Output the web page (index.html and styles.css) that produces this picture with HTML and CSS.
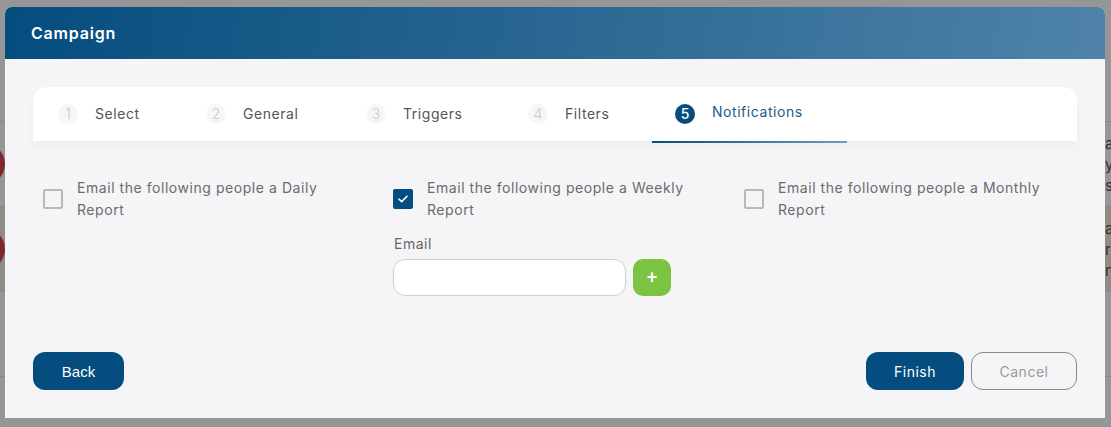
FILE: index.html
```html
<!DOCTYPE html>
<html lang="en">
<head>
  <meta charset="UTF-8" />
  <meta name="viewport" content="width=device-width, initial-scale=1.0"/>
  <title>Campaign - Notifications</title>
  <link rel="stylesheet" href="styles.css">
</head>
<body>
  <!-- page behind the modal -->
  <div class="page">
    <div class="page-row top"></div>
    <div class="page-row">
      <span class="avatar"></span>
      <span class="row-text">a<br>y,<br>s</span>
    </div>
    <div class="page-row tinted">
      <span class="avatar"></span>
      <span class="row-text">a<br>r<br>n</span>
    </div>
    <div class="page-row"></div>
  </div>

  <div class="overlay">
    <div class="modal">
      <div class="modal-header">Campaign</div>

      <div class="modal-body">
        <div class="steps">
          <div class="step"><span class="step-num">1</span>Select</div>
          <div class="step"><span class="step-num">2</span>General</div>
          <div class="step"><span class="step-num">3</span>Triggers</div>
          <div class="step"><span class="step-num">4</span>Filters</div>
          <div class="step active"><span class="step-num">5</span>Notifications</div>
        </div>

        <div class="options">
          <div class="option">
            <label class="check-row">
              <span class="checkbox"></span>
              <span class="check-text">Email the following people a Daily Report</span>
            </label>
          </div>
          <div class="option">
            <label class="check-row">
              <span class="checkbox checked">
                <svg width="10" height="8" viewBox="0 0 10 8"><path d="M1 4.2 3.7 6.6 9 1.2" fill="none" stroke="#fff" stroke-width="1.6" stroke-linecap="round" stroke-linejoin="round"/></svg>
              </span>
              <span class="check-text">Email the following people a Weekly Report</span>
            </label>
            <div class="email-field">
              <label class="field-label" for="email">Email</label>
              <div class="email-row">
                <input id="email" type="text" class="email-input">
                <button class="add-btn">+</button>
              </div>
            </div>
          </div>
          <div class="option">
            <label class="check-row">
              <span class="checkbox"></span>
              <span class="check-text">Email the following people a Monthly Report</span>
            </label>
          </div>
        </div>

        <div class="modal-footer">
          <button class="btn btn-primary btn-back">Back</button>
          <div class="footer-right">
            <button class="btn btn-primary btn-finish">Finish</button>
            <button class="btn btn-outline">Cancel</button>
          </div>
        </div>
      </div>
    </div>
  </div>
</body>
</html>
```

FILE: styles.css
```css
* {
  box-sizing: border-box;
}
body {
  margin: 0;
  width: 1111px;
  height: 427px;
  overflow: hidden;
  font-family: Inter, "Open Sans", sans-serif;
  background: #fff;
  position: relative;
}

/* background page */
.page {
  height: 427px;
}
.page-row {
  height: 85px;
  border-bottom: 1px solid #e6e6e6;
  display: flex;
  justify-content: space-between;
  align-items: center;
}
.page-row.top {
  height: 122px;
}
.page-row.tinted {
  background: #f3efe6;
}
.avatar {
  width: 42px;
  height: 42px;
  border-radius: 50%;
  background: #d9434e;
  margin-left: -37px;
}
.row-text {
  font-size: 15px;
  line-height: 21px;
  color: #555;
  width: 6px;
  overflow: hidden;
}

/* modal */
.overlay {
  position: absolute;
  inset: 0;
  background: rgba(0, 0, 0, 0.41);
}
.modal {
  margin: 7px 0 0 5px;
  width: 1100px;
  height: 411px;
  background: #f5f5f8;
  border-radius: 7px 7px 0 0;
  display: flex;
  flex-direction: column;
}
.modal-header {
  height: 52px;
  padding-left: 26px;
  display: flex;
  align-items: center;
  color: #fff;
  font-size: 16px;
  font-weight: 600;
  letter-spacing: 0.8px;
  border-radius: 7px 7px 0 0;
  background: linear-gradient(100deg, #044d7e 0%, #2a6792 50%, #4f83a9 100%);
}
.modal-body {
  flex: 1;
  padding: 28px;
  display: flex;
  flex-direction: column;
}

/* stepper */
.steps {
  height: 54px;
  background: #fff;
  border-radius: 14px 14px 0 0;
  display: flex;
  box-shadow: 0 6px 12px rgba(0, 0, 0, 0.03);
}
.step {
  position: relative;
  display: flex;
  align-items: center;
  gap: 17px;
  padding: 0 40px 1px 25px;
  font-size: 14px;
  letter-spacing: 0.55px;
  color: #555;
}
.step-num {
  width: 20px;
  height: 20px;
  border-radius: 50%;
  background: #f6f6f6;
  color: #c9c9c9;
  font-size: 14px;
  font-weight: 300;
  letter-spacing: 0;
  display: flex;
  align-items: center;
  justify-content: center;
}
.step:nth-child(1) { width: 148px; }
.step:nth-child(2) { width: 160px; }
.step:nth-child(3) { width: 162px; }
.step:nth-child(4) { width: 147px; }
.step.active {
  width: 195px;
  margin-left: 2px;
  padding-left: 23px;
  padding-bottom: 5px;
  color: #1d5a88;
}
.step.active .step-num {
  background: #044d7e;
  color: #fff;
  font-weight: 500;
  margin-top: 4px;
}
.step.active::after {
  content: "";
  position: absolute;
  left: 0;
  right: 0;
  bottom: -2px;
  height: 2px;
  background: linear-gradient(90deg, #044d7e, #6f9cbd);
}

/* options */
.options {
  display: grid;
  grid-template-columns: 350px 351px 330px;
  padding-left: 10px;
  margin-top: 36px;
}
.check-row {
  display: flex;
  align-items: center;
  gap: 14px;
}
.checkbox {
  width: 20px;
  height: 20px;
  flex: none;
  border: 2px solid #b9b9b9;
  border-radius: 2px;
  display: flex;
  align-items: center;
  justify-content: center;
}
.checkbox.checked {
  background: #044d7e;
  border-color: #044d7e;
}
.check-text {
  width: 276px;
  font-size: 14px;
  line-height: 22px;
  letter-spacing: 0.55px;
  color: #6b6b6b;
}
.email-field {
  margin-top: 13px;
}
.field-label {
  display: block;
  font-size: 14px;
  line-height: 20px;
  letter-spacing: 0.5px;
  color: #666;
  margin-bottom: 5px;
  padding-left: 1px;
}
.email-row {
  display: flex;
  gap: 7px;
}
.email-input {
  width: 233px;
  height: 37px;
  border: 1px solid #cfcfcf;
  border-radius: 12px;
  background: #fff;
}
.add-btn {
  width: 38px;
  height: 37px;
  border: none;
  border-radius: 10px;
  background: #7cc243;
  color: #fff;
  font-size: 18px;
  font-weight: 600;
  padding: 0;
}

/* footer */
.modal-footer {
  margin-top: auto;
  display: flex;
  justify-content: space-between;
}
.footer-right {
  display: flex;
  gap: 7px;
}
.btn {
  height: 38px;
  border-radius: 12px;
  font-family: Inter, "Open Sans", sans-serif;
  font-size: 14px;
  letter-spacing: 0.5px;
  padding: 0;
}
.btn-primary {
  background: #044d7e;
  color: #fff;
  border: none;
}
.btn-back {
  width: 91px;
  font-family: "Liberation Sans", Arial, sans-serif;
  font-size: 15px;
  letter-spacing: 0;
}
.btn-finish {
  width: 98px;
}
.btn-outline {
  width: 106px;
  background: transparent;
  border: 1px solid #8a8a8a;
  color: #9a9a9a;
}
```
